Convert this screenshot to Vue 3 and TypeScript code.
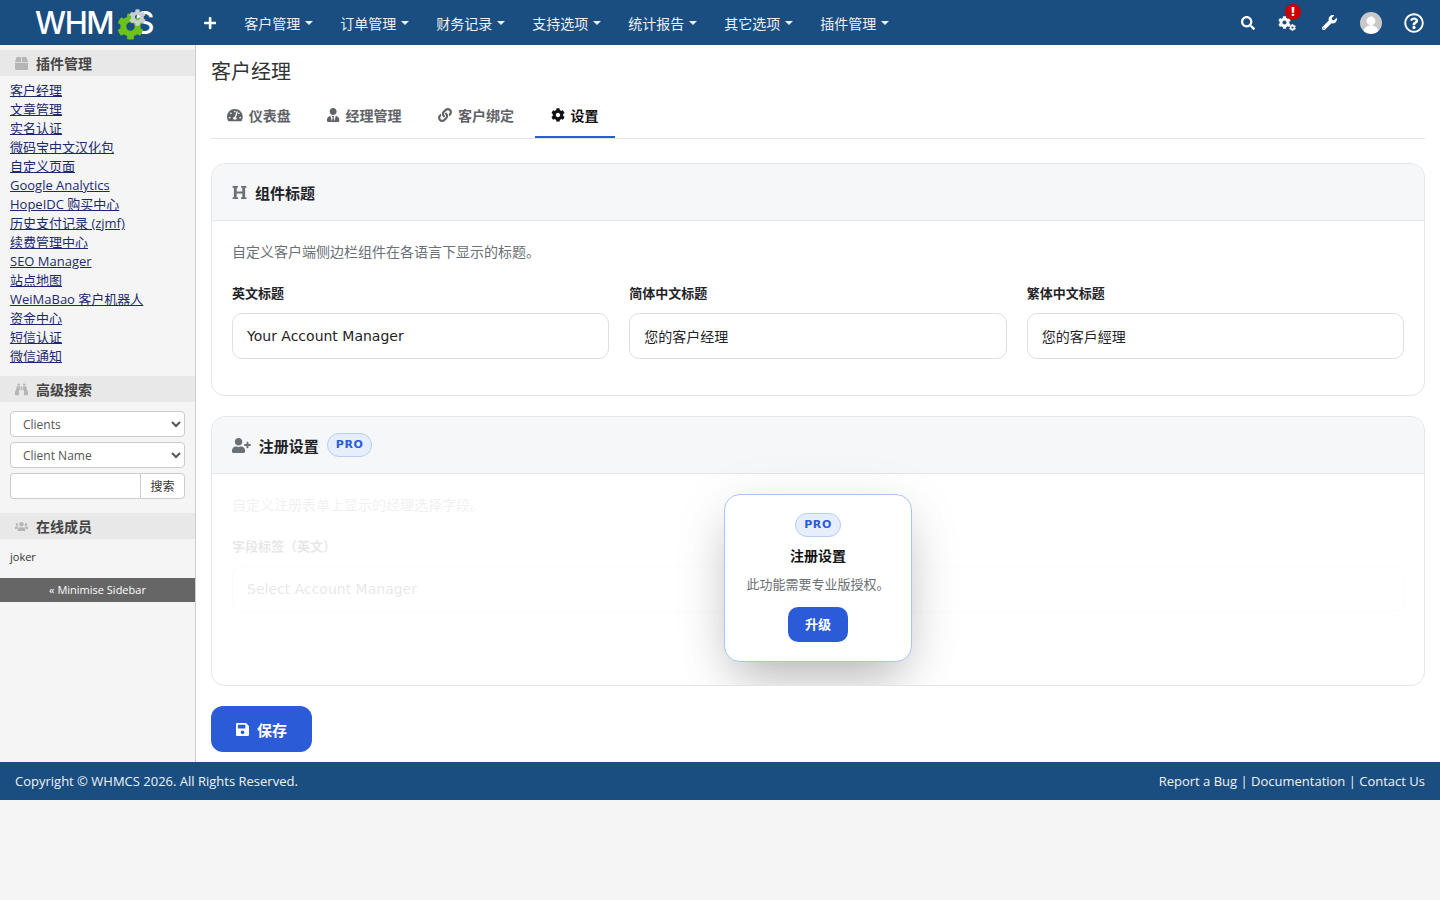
<script setup lang="ts">
const icons: Record<string, { w: number; d: string }> = {
  plus: { w: 448, d: "M416 208H272V64c0-17.67-14.33-32-32-32h-32c-17.67 0-32 14.33-32 32v144H32c-17.67 0-32 14.33-32 32v32c0 17.67 14.33 32 32 32h144v144c0 17.67 14.33 32 32 32h32c17.67 0 32-14.33 32-32V304h144c17.67 0 32-14.33 32-32v-32c0-17.67-14.33-32-32-32z" },
  search: { w: 512, d: "M505 442.7L405.3 343c-4.5-4.5-10.6-7-17-7H372c27.6-35.3 44-79.7 44-128C416 93.1 322.9 0 208 0S0 93.1 0 208s93.1 208 208 208c48.3 0 92.7-16.4 128-44v16.3c0 6.4 2.5 12.5 7 17l99.7 99.7c9.4 9.4 24.6 9.4 33.9 0l28.3-28.3c9.4-9.4 9.4-24.6.1-34zM208 336c-70.7 0-128-57.2-128-128 0-70.7 57.2-128 128-128 70.7 0 128 57.2 128 128 0 70.7-57.2 128-128 128z" },
  cog: { w: 512, d: "M487.4 315.7l-42.6-24.6c4.3-23.2 4.3-47 0-70.2l42.6-24.6c4.9-2.8 7.1-8.6 5.5-14-11.1-35.6-30-67.8-54.7-94.6-3.8-4.1-10-5.1-14.8-2.3L380.8 110c-17.9-15.4-38.5-27.3-60.8-35.1V25.8c0-5.6-3.9-10.5-9.4-11.7-36.7-8.2-74.3-7.8-109.2 0-5.5 1.2-9.4 6.1-9.4 11.7V75c-22.2 7.9-42.8 19.8-60.8 35.1L88.7 85.5c-4.9-2.8-11-1.9-14.8 2.3-24.7 26.7-43.6 58.9-54.7 94.6-1.7 5.4.6 11.2 5.5 14L67.3 221c-4.3 23.2-4.3 47 0 70.2l-42.6 24.6c-4.9 2.8-7.1 8.6-5.5 14 11.1 35.6 30 67.8 54.7 94.6 3.8 4.1 10 5.1 14.8 2.3l42.6-24.6c17.9 15.4 38.5 27.3 60.8 35.1v49.2c0 5.6 3.9 10.5 9.4 11.7 36.7 8.2 74.3 7.8 109.2 0 5.5-1.2 9.4-6.1 9.4-11.7v-49.2c22.2-7.9 42.8-19.8 60.8-35.1l42.6 24.6c4.9 2.8 11 1.9 14.8-2.3 24.7-26.7 43.6-58.9 54.7-94.6 1.5-5.5-.7-11.3-5.6-14.1zM256 336c-44.1 0-80-35.9-80-80s35.9-80 80-80 80 35.9 80 80-35.9 80-80 80z" },
  wrench: { w: 512, d: "M507.73 109.1c-2.24-9.03-13.54-12.09-20.12-5.51l-74.36 74.36-67.88-11.31-11.31-67.88 74.36-74.36c6.62-6.62 3.43-17.9-5.66-20.16-47.38-11.74-99.55.91-136.58 37.93-39.64 39.64-50.55 97.1-34.05 147.2L18.74 402.76c-24.99 24.99-24.99 65.51 0 90.5 24.99 24.99 65.51 24.99 90.5 0l213.21-213.21c50.12 16.71 107.47 5.68 147.37-34.22 37.07-37.07 49.7-89.32 37.91-136.73zM64 472c-13.25 0-24-10.75-24-24 0-13.26 10.75-24 24-24s24 10.74 24 24c0 13.25-10.75 24-24 24z" },
  help: { w: 512, d: "M256 8C119.043 8 8 119.083 8 256c0 136.997 111.043 248 248 248s248-111.003 248-248C504 119.083 392.957 8 256 8zm0 448c-110.532 0-200-89.431-200-200 0-110.495 89.472-200 200-200 110.491 0 200 89.471 200 200 0 110.53-89.431 200-200 200zm107.244-255.2c0 67.052-72.421 68.084-72.421 92.863V300c0 6.627-5.373 12-12 12h-45.647c-6.627 0-12-5.373-12-12v-8.659c0-35.745 27.1-50.034 47.579-61.516 17.561-9.845 28.324-16.541 28.324-29.579 0-17.246-21.999-28.693-39.784-28.693-23.189 0-33.894 10.977-48.942 29.969-4.057 5.12-11.46 6.071-16.666 2.124l-27.824-21.098c-5.107-3.872-6.251-11.066-2.644-16.363C184.846 131.491 214.94 112 261.794 112c49.071 0 101.45 38.304 101.45 88.8zM298 368c0 23.159-18.841 42-42 42s-42-18.841-42-42 18.841-42 42-42 42 18.841 42 42z" },
  box: { w: 512, d: "M509.5 184.6L458.9 32.8C452.4 13.2 434.1 0 413.4 0H272v192h238.7c-.4-2.5-.4-5-1.2-7.4zM240 0H98.6c-20.7 0-39 13.2-45.5 32.8L2.5 184.6c-.8 2.4-.8 4.9-1.2 7.4H240V0zM0 224v240c0 26.5 21.5 48 48 48h416c26.5 0 48-21.5 48-48V224H0z" },
  binoculars: { w: 512, d: "M416 48c0-8.84-7.16-16-16-16h-64c-8.84 0-16 7.16-16 16v48h96V48zM63.91 159.99C61.4 253.84 3.46 274.22 0 404v44c0 17.67 14.33 32 32 32h96c17.67 0 32-14.33 32-32V288h32V128H95.84c-17.63 0-31.45 14.37-31.93 31.99zm384.18 0c-.48-17.62-14.3-31.99-31.93-31.99H320v160h32v160c0 17.67 14.33 32 32 32h96c17.67 0 32-14.33 32-32v-44c-3.46-129.78-61.4-150.16-63.91-244.01zM176 32h-64c-8.84 0-16 7.16-16 16v48h96V48c0-8.84-7.16-16-16-16zm48 256h64V128h-64v160z" },
  users: { w: 640, d: "M96 224c35.3 0 64-28.7 64-64s-28.7-64-64-64-64 28.7-64 64 28.7 64 64 64zm448 0c35.3 0 64-28.7 64-64s-28.7-64-64-64-64 28.7-64 64 28.7 64 64 64zm32 32h-64c-17.6 0-33.5 7.1-45.1 18.6 40.3 22.1 68.9 62 75.1 109.4h66c17.7 0 32-14.3 32-32v-32c0-35.3-28.7-64-64-64zm-256 0c61.9 0 112-50.1 112-112S381.9 32 320 32 208 82.1 208 144s50.1 112 112 112zm76.8 32h-8.3c-20.8 10-43.9 16-68.5 16s-47.6-6-68.5-16h-8.3C179.6 288 128 339.6 128 403.2V432c0 26.5 21.5 48 48 48h288c26.5 0 48-21.5 48-48v-28.8c0-63.6-51.6-115.2-115.2-115.2zm-223.7-13.4C161.5 263.1 145.6 256 128 256H64c-35.3 0-64 28.7-64 64v32c0 17.7 14.3 32 32 32h65.9c6.3-47.4 34.9-87.3 75.2-109.4z" },
  tacho: { w: 576, d: "M288 32C128.94 32 0 160.94 0 320c0 52.8 14.25 102.26 39.06 144.8 5.61 9.62 16.3 15.2 27.44 15.2h443c11.14 0 21.83-5.58 27.44-15.2C561.75 422.26 576 372.8 576 320c0-159.06-128.94-288-288-288zm0 64c14.71 0 26.58 10.13 30.32 23.65-1.11 2.26-2.64 4.23-3.45 6.67l-9.22 27.67c-5.13 3.49-10.97 6.01-17.64 6.01-17.67 0-32-14.33-32-32S270.33 96 288 96zM96 384c-17.67 0-32-14.33-32-32s14.33-32 32-32 32 14.33 32 32-14.33 32-32 32zm48-160c-17.67 0-32-14.33-32-32s14.33-32 32-32 32 14.33 32 32-14.33 32-32 32zm246.77-72.41l-61.33 184C343.13 347.33 352 364.54 352 384c0 11.72-3.38 22.55-8.88 32H232.88c-5.5-9.45-8.88-20.28-8.88-32 0-33.94 26.5-61.43 59.9-63.59l61.34-184.01c4.17-12.56 17.73-19.45 30.36-15.17 12.57 4.19 19.35 17.79 15.17 30.36zm14.66 57.2l15.52-46.55c3.47-1.29 7.13-2.23 11.05-2.23 17.67 0 32 14.33 32 32s-14.33 32-32 32c-11.38-.01-20.89-6.28-26.57-15.22zM480 384c-17.67 0-32-14.33-32-32s14.33-32 32-32 32 14.33 32 32-14.33 32-32 32z" },
  userTie: { w: 448, d: "M224 256c70.7 0 128-57.3 128-128S294.7 0 224 0 96 57.3 96 128s57.3 128 128 128zm95.8 32.6L272 480l-32-136 32-56h-96l32 56-32 136-47.8-191.4C56.9 292 0 350.3 0 422.4V464c0 26.5 21.5 48 48 48h352c26.5 0 48-21.5 48-48v-41.6c0-72.1-56.9-130.4-128.2-133.8z" },
  link: { w: 512, d: "M326.612 185.391c59.747 59.809 58.927 155.698.36 214.59-.11.12-.24.25-.36.37l-67.2 67.2c-59.27 59.27-155.699 59.262-214.96 0-59.27-59.26-59.27-155.7 0-214.96l37.106-37.106c9.84-9.84 26.786-3.3 27.294 10.606.648 17.722 3.826 35.527 9.69 52.721 1.986 5.822.567 12.262-3.783 16.612l-13.087 13.087c-28.026 28.026-28.905 73.66-1.155 101.96 28.024 28.579 74.086 28.749 102.325.51l67.2-67.19c28.191-28.191 28.073-73.757 0-101.83-3.701-3.694-7.429-6.564-10.341-8.569a16.037 16.037 0 0 1-6.947-12.606c-.396-10.567 3.348-21.456 11.698-29.806l21.054-21.055c5.521-5.521 14.182-6.199 20.584-1.731a152.482 152.482 0 0 1 20.522 17.197zM467.547 44.449c-59.261-59.262-155.69-59.27-214.96 0l-67.2 67.2c-.12.12-.25.25-.36.37-58.566 58.892-59.387 154.781.36 214.59a152.454 152.454 0 0 0 20.521 17.196c6.402 4.468 15.064 3.789 20.584-1.731l21.054-21.055c8.35-8.35 12.094-19.239 11.698-29.806a16.037 16.037 0 0 0-6.947-12.606c-2.912-2.005-6.64-4.875-10.341-8.569-28.073-28.073-28.191-73.639 0-101.83l67.2-67.19c28.239-28.239 74.3-28.069 102.325.51 27.75 28.3 26.872 73.934-1.155 101.96l-13.087 13.087c-4.35 4.35-5.769 10.79-3.783 16.612 5.864 17.194 9.042 34.999 9.69 52.721.509 13.906 17.454 20.446 27.294 10.606l37.106-37.106c59.271-59.259 59.271-155.699.001-214.959z" },
  heading: { w: 512, d: "M448 96v320h32a16 16 0 0 1 16 16v32a16 16 0 0 1-16 16H320a16 16 0 0 1-16-16v-32a16 16 0 0 1 16-16h32V288H160v128h32a16 16 0 0 1 16 16v32a16 16 0 0 1-16 16H32a16 16 0 0 1-16-16v-32a16 16 0 0 1 16-16h32V96H32a16 16 0 0 1-16-16V48a16 16 0 0 1 16-16h160a16 16 0 0 1 16 16v32a16 16 0 0 1-16 16h-32v128h192V96h-32a16 16 0 0 1-16-16V48a16 16 0 0 1 16-16h160a16 16 0 0 1 16 16v32a16 16 0 0 1-16 16z" },
  userPlus: { w: 640, d: "M624 208h-64v-64c0-8.8-7.2-16-16-16h-32c-8.8 0-16 7.2-16 16v64h-64c-8.8 0-16 7.2-16 16v32c0 8.8 7.2 16 16 16h64v64c0 8.8 7.2 16 16 16h32c8.8 0 16-7.2 16-16v-64h64c8.8 0 16-7.2 16-16v-32c0-8.8-7.2-16-16-16zm-400 48c70.7 0 128-57.3 128-128S294.7 0 224 0 96 57.3 96 128s57.3 128 128 128zm89.6 32h-16.7c-22.2 10.2-46.9 16-72.9 16s-50.6-5.8-72.9-16h-16.7C60.2 288 0 348.2 0 422.4V464c0 26.5 21.5 48 48 48h352c26.5 0 48-21.5 48-48v-41.6c0-74.2-60.2-134.4-134.4-134.4z" },
  save: { w: 448, d: "M433.941 129.941l-83.882-83.882A48 48 0 0 0 316.118 32H48C21.49 32 0 53.49 0 80v352c0 26.51 21.49 48 48 48h352c26.51 0 48-21.49 48-48V163.882a48 48 0 0 0-14.059-33.941zM224 416c-35.346 0-64-28.654-64-64 0-35.346 28.654-64 64-64s64 28.654 64 64c0 35.346-28.654 64-64 64zm96-304.52V212c0 6.627-5.373 12-12 12H76c-6.627 0-12-5.373-12-12V108c0-6.627 5.373-12 12-12h228.52c3.183 0 6.235 1.264 8.485 3.515l3.48 3.48A11.996 11.996 0 0 1 320 111.48z" },
};

const menu = ["客户管理", "订单管理", "财务记录", "支持选项", "统计报告", "其它选项", "插件管理"];

const addons = [
  "客户经理",
  "文章管理",
  "实名认证",
  "微码宝中文汉化包",
  "自定义页面",
  "Google Analytics",
  "HopeIDC 购买中心",
  "历史支付记录 (zjmf)",
  "续费管理中心",
  "SEO Manager",
  "站点地图",
  "WeiMaBao 客户机器人",
  "资金中心",
  "短信认证",
  "微信通知",
];

const tabs = [
  { label: "仪表盘", icon: "tacho" },
  { label: "经理管理", icon: "userTie" },
  { label: "客户绑定", icon: "link" },
  { label: "设置", icon: "cog", active: true },
];

const titleFields = [
  { label: "英文标题", value: "Your Account Manager" },
  { label: "简体中文标题", value: "您的客户经理" },
  { label: "繁体中文标题", value: "您的客戶經理" },
];

const viewBox = (name: string) => `0 0 ${icons[name].w} 512`;
</script>

<template>
  <div class="page">
    <header class="topbar">
      <a class="logo" href="#">
        <span class="logo-text">WHM</span>
        <span class="logo-text logo-c">C</span>
        <span class="logo-text">S</span>
        <svg class="logo-gear green" viewBox="0 0 512 512"><path :d="icons.cog.d" /></svg>
        <svg class="logo-gear grey" viewBox="0 0 512 512"><path :d="icons.cog.d" /></svg>
      </a>
      <svg class="icon plus" :viewBox="viewBox('plus')"><path :d="icons.plus.d" /></svg>
      <nav class="menu">
        <a v-for="item in menu" :key="item" class="menu-item" href="#">{{ item }}<i class="caret"></i></a>
      </nav>
      <div class="tools">
        <svg class="icon tool-search" :viewBox="viewBox('search')"><path :d="icons.search.d" /></svg>
        <span class="tool-cogs">
          <svg class="cog-big" viewBox="0 0 512 512"><path :d="icons.cog.d" /></svg>
          <svg class="cog-small" viewBox="0 0 512 512"><path :d="icons.cog.d" /></svg>
          <span class="alert">!</span>
        </span>
        <svg class="icon tool-wrench" :viewBox="viewBox('wrench')"><path :d="icons.wrench.d" /></svg>
        <svg class="avatar" viewBox="0 0 22 22">
          <circle cx="11" cy="11" r="11" fill="#c8c8c8" />
          <circle cx="11" cy="9" r="4.4" fill="#fff" />
          <path d="M3.6 19c1-3.8 4-5.4 7.4-5.4s6.4 1.6 7.4 5.4a11 11 0 0 1-14.8 0z" fill="#fff" />
        </svg>
        <svg class="icon tool-help" :viewBox="viewBox('help')"><path :d="icons.help.d" /></svg>
      </div>
    </header>

    <div class="body">
      <aside class="sidebar">
        <h3 class="side-title">
          <svg class="side-icon" :viewBox="viewBox('box')"><path :d="icons.box.d" /></svg>插件管理
        </h3>
        <ul class="side-links">
          <li v-for="name in addons" :key="name"><a href="#">{{ name }}</a></li>
        </ul>
        <h3 class="side-title">
          <svg class="side-icon" :viewBox="viewBox('binoculars')"><path :d="icons.binoculars.d" /></svg>高级搜索
        </h3>
        <form class="side-search" @submit.prevent>
          <select class="side-select"><option>Clients</option></select>
          <select class="side-select"><option>Client Name</option></select>
          <div class="side-group">
            <input class="side-input" type="text" />
            <button class="side-btn" type="button">搜索</button>
          </div>
        </form>
        <h3 class="side-title">
          <svg class="side-icon" :viewBox="viewBox('users')"><path :d="icons.users.d" /></svg>在线成员
        </h3>
        <p class="side-user">joker</p>
        <div class="minimise">« Minimise Sidebar</div>
      </aside>

      <main class="main">
        <h1 class="page-title">客户经理</h1>
        <div class="tabs">
          <a v-for="tab in tabs" :key="tab.label" class="tab" :class="{ active: tab.active }" href="#">
            <svg class="tab-icon" :viewBox="viewBox(tab.icon)"><path :d="icons[tab.icon].d" /></svg>{{ tab.label }}
          </a>
        </div>

        <section class="card">
          <div class="card-head">
            <svg class="head-icon" :viewBox="viewBox('heading')"><path :d="icons.heading.d" /></svg>
            <span>组件标题</span>
          </div>
          <div class="card-body">
            <p class="desc">自定义客户端侧边栏组件在各语言下显示的标题。</p>
            <div class="field-grid">
              <label v-for="field in titleFields" :key="field.label" class="field">
                <span class="field-label">{{ field.label }}</span>
                <input class="field-input" type="text" :value="field.value" />
              </label>
            </div>
          </div>
        </section>

        <section class="card locked-card">
          <div class="card-head">
            <svg class="head-icon" :viewBox="viewBox('userPlus')"><path :d="icons.userPlus.d" /></svg>
            <span>注册设置</span>
            <span class="pro">PRO</span>
          </div>
          <div class="card-body locked-body">
            <div class="locked-content">
              <p class="desc">自定义注册表单上显示的经理选择字段。</p>
              <label class="field">
                <span class="field-label">字段标签（英文）</span>
                <input class="field-input ghost" type="text" value="Select Account Manager" />
              </label>
            </div>
            <div class="upsell">
              <span class="pro">PRO</span>
              <strong class="upsell-title">注册设置</strong>
              <p class="upsell-text">此功能需要专业版授权。</p>
              <a class="upsell-btn" href="#">升级</a>
            </div>
          </div>
        </section>

        <button class="save" type="button">
          <svg class="save-icon" :viewBox="viewBox('save')"><path :d="icons.save.d" /></svg>保存
        </button>
      </main>
    </div>

    <footer class="footer">
      <span>Copyright © WHMCS 2026. All Rights Reserved.</span>
      <span class="footer-links">
        <a href="#">Report a Bug</a> | <a href="#">Documentation</a> | <a href="#">Contact Us</a>
      </span>
    </footer>
  </div>
</template>

<style>
html,
body {
  background: #f5f5f5;
}
</style>

<style scoped>
.page {
  font-family: "Open Sans", "Noto Sans CJK SC", sans-serif;
  font-size: 13px;
  color: #333;
}
svg {
  fill: currentColor;
  display: block;
}
a {
  color: inherit;
  text-decoration: none;
}

/* top bar */
.topbar {
  height: 45px;
  background: #1a4d80;
  color: #fff;
  display: flex;
  align-items: center;
}
.logo {
  position: relative;
  display: flex;
  align-items: center;
  width: 125px;
  margin-left: 35px;
  height: 45px;
}
.logo-text {
  font-family: Inter, sans-serif;
  font-size: 31px;
  font-weight: 500;
  letter-spacing: -1.4px;
  color: #fff;
}
.logo-c {
  visibility: hidden;
}
.logo-gear {
  position: absolute;
}
.logo-gear.green {
  left: 82px;
  top: 13px;
  width: 27px;
  height: 27px;
  color: #69c31a;
}
.logo-gear.grey {
  left: 94px;
  top: 9px;
  width: 17px;
  height: 17px;
  color: #c9ced2;
}
.icon {
  height: 14px;
}
.plus {
  margin-left: 44px;
  height: 14px;
  width: 12.25px;
}
.menu {
  display: flex;
  margin-left: 28px;
}
.menu-item {
  width: 96px;
  font-size: 14px;
  color: #eaf0f6;
  display: flex;
  align-items: center;
}
.caret {
  margin-left: 5px;
  border-top: 4px solid currentColor;
  border-left: 4px solid transparent;
  border-right: 4px solid transparent;
}
.tools {
  margin-left: auto;
  padding-right: 16px;
  display: flex;
  align-items: center;
}
.tool-search {
  width: 14px;
}
.tool-cogs {
  position: relative;
  width: 18px;
  height: 16px;
  margin-left: 23px;
}
.cog-big {
  position: absolute;
  left: 0;
  top: 1px;
  width: 13px;
  height: 13px;
}
.cog-small {
  position: absolute;
  right: 0;
  bottom: 0;
  width: 7px;
  height: 7px;
}
.alert {
  position: absolute;
  left: 7px;
  top: -11px;
  width: 16px;
  height: 16px;
  border-radius: 50%;
  background: #cc0000;
  color: #fff;
  font-size: 12px;
  font-weight: 800;
  line-height: 16px;
  text-align: center;
}
.tool-wrench {
  width: 15px;
  height: 15px;
  margin-left: 26px;
}
.avatar {
  width: 22px;
  height: 22px;
  margin-left: 23px;
}
.tool-help {
  width: 20px;
  height: 20px;
  margin-left: 22px;
}

/* layout */
.body {
  display: flex;
}

/* sidebar */
.sidebar {
  width: 195px;
  flex: none;
  box-sizing: content-box;
  padding-top: 5px;
  background: #f5f5f5;
  border-right: 1px solid #cccccc;
}
.side-title {
  margin: 0;
  height: 26px;
  display: flex;
  align-items: center;
  padding-left: 15px;
  background: #e8e8e8;
  color: #444;
  font-size: 14px;
  font-weight: 700;
}
.side-icon {
  width: 13px;
  height: 13px;
  margin-right: 8px;
  color: #b5b5b5;
}
.side-links {
  list-style: none;
  margin: 0;
  padding: 5px 10px 10px;
}
.side-links li {
  line-height: 19px;
}
.side-links a {
  color: #1c2a6b;
  text-decoration: underline;
}
.side-search {
  padding: 9px 10px 14px;
}
.side-select {
  display: block;
  width: 175px;
  height: 26px;
  margin-bottom: 5px;
  padding: 0 8px;
  box-sizing: border-box;
  background: #fff;
  border: 1px solid #ccc;
  border-radius: 4px;
  color: #555;
  font: 12px "Open Sans", "Noto Sans CJK SC", sans-serif;
}
.side-group {
  display: flex;
  height: 26px;
}
.side-input {
  width: 130px;
  box-sizing: border-box;
  background: #fff;
  border: 1px solid #ccc;
  border-right: 0;
  border-radius: 4px 0 0 4px;
  padding: 0 6px;
}
.side-btn {
  width: 45px;
  background: #fff;
  border: 1px solid #ccc;
  border-radius: 0 4px 4px 0;
  color: #333;
  font: 12px "Open Sans", "Noto Sans CJK SC", sans-serif;
  padding: 0;
}
.side-user {
  margin: 0;
  padding: 10px;
  font-size: 11px;
  line-height: 15px;
  color: #333;
  height: 39px;
  box-sizing: border-box;
}
.minimise {
  height: 24px;
  line-height: 24px;
  background: #666;
  color: #fff;
  font-size: 11px;
  text-align: center;
}

/* main column */
.main {
  flex: 1;
  min-width: 0;
  height: 717px;
  box-sizing: border-box;
  padding: 15px 15px 15px;
  background: #fff;
  font-family: "DejaVu Sans", "Noto Sans CJK SC", sans-serif;
}
.page-title {
  margin: 0 0 10px;
  font-family: "Open Sans", "Noto Sans CJK SC", sans-serif;
  font-size: 20px;
  line-height: 24px;
  font-weight: 400;
  color: #333;
}
.tabs {
  display: flex;
  gap: 4.5px;
  height: 44px;
  border-bottom: 1px solid #e3e5e8;
  margin-bottom: 24px;
}
.tab {
  display: flex;
  align-items: center;
  height: 44px;
  padding: 0 16px;
  box-sizing: border-box;
  color: #5f6368;
  font-size: 14px;
  font-weight: 700;
  border-bottom: 2px solid transparent;
}
.tab.active {
  color: #111;
  border-bottom-color: #2b5bd7;
}
.tab-icon {
  height: 14px;
  margin-right: 6px;
}

/* cards */
.card {
  border: 1px solid #e3e5e8;
  border-radius: 14px;
  overflow: hidden;
  margin-bottom: 20px;
  background: #fff;
}
.card-head {
  height: 56px;
  display: flex;
  align-items: center;
  padding: 0 20px;
  background: #f6f7f9;
  border-bottom: 1px solid #e3e5e8;
  font-size: 15px;
  font-weight: 700;
  color: #1f2328;
}
.head-icon {
  height: 15px;
  margin-right: 8px;
  color: #6b7075;
}
.card-body {
  padding: 21px 20px 36px;
}
.desc {
  margin: 0 0 21px;
  font-size: 14px;
  line-height: 21px;
  color: #6b7075;
}
.field-grid {
  display: grid;
  grid-template-columns: repeat(3, 1fr);
  gap: 20px;
}
.field {
  display: block;
}
.field-label {
  display: block;
  margin-bottom: 9px;
  font-size: 13px;
  line-height: 20px;
  font-weight: 700;
  color: #1f2328;
}
.field-input {
  display: block;
  width: 100%;
  height: 46px;
  box-sizing: border-box;
  padding: 0 14px;
  border: 1px solid #dcdfe3;
  border-radius: 10px;
  background: #fff;
  color: #1f2328;
  font: 14px "DejaVu Sans", "Noto Sans CJK SC", sans-serif;
}
.pro {
  display: inline-block;
  margin-left: 8px;
  padding: 0 8px;
  height: 22px;
  line-height: 22px;
  border: 1px solid #b7cdf6;
  border-radius: 12px;
  background: #e6eefc;
  color: #2b5bd7;
  font-size: 11px;
  font-weight: 700;
  letter-spacing: 0.6px;
}
.locked-body {
  position: relative;
  padding-bottom: 73px;
}
.locked-content {
  opacity: 0.1;
}
.upsell {
  position: absolute;
  left: 50%;
  top: 20px;
  width: 188px;
  height: 168px;
  margin-left: -94px;
  box-sizing: border-box;
  padding-top: 18px;
  display: flex;
  flex-direction: column;
  align-items: center;
  background: #fff;
  border: 1px solid #a9c4f7;
  border-radius: 16px;
  box-shadow: 0 25px 50px -12px rgba(0, 0, 0, 0.25), 0 10px 60px rgba(0, 0, 0, 0.08);
}
.upsell .pro {
  margin-left: 0;
}
.upsell-title {
  margin-top: 8px;
  font-size: 14px;
  line-height: 22px;
  color: #111;
}
.upsell-text {
  margin: 8px 0 12px;
  font-size: 13px;
  line-height: 20px;
  color: #6b7075;
}
.upsell-btn {
  width: 60px;
  height: 35px;
  line-height: 35px;
  text-align: center;
  border-radius: 10px;
  background: #2b5bd7;
  color: #fff;
  font-size: 13px;
  font-weight: 700;
}
.save {
  display: flex;
  align-items: center;
  justify-content: center;
  width: 101px;
  height: 46px;
  border: 0;
  border-radius: 12px;
  background: #2b5bd7;
  color: #fff;
  font: 700 15px "DejaVu Sans", "Noto Sans CJK SC", sans-serif;
}
.save-icon {
  height: 15px;
  margin-right: 8px;
}

/* footer */
.footer {
  height: 38px;
  padding: 0 15px;
  background: #1a4d80;
  color: #f0f4f8;
  display: flex;
  align-items: center;
  justify-content: space-between;
  font-size: 13px;
}
</style>
